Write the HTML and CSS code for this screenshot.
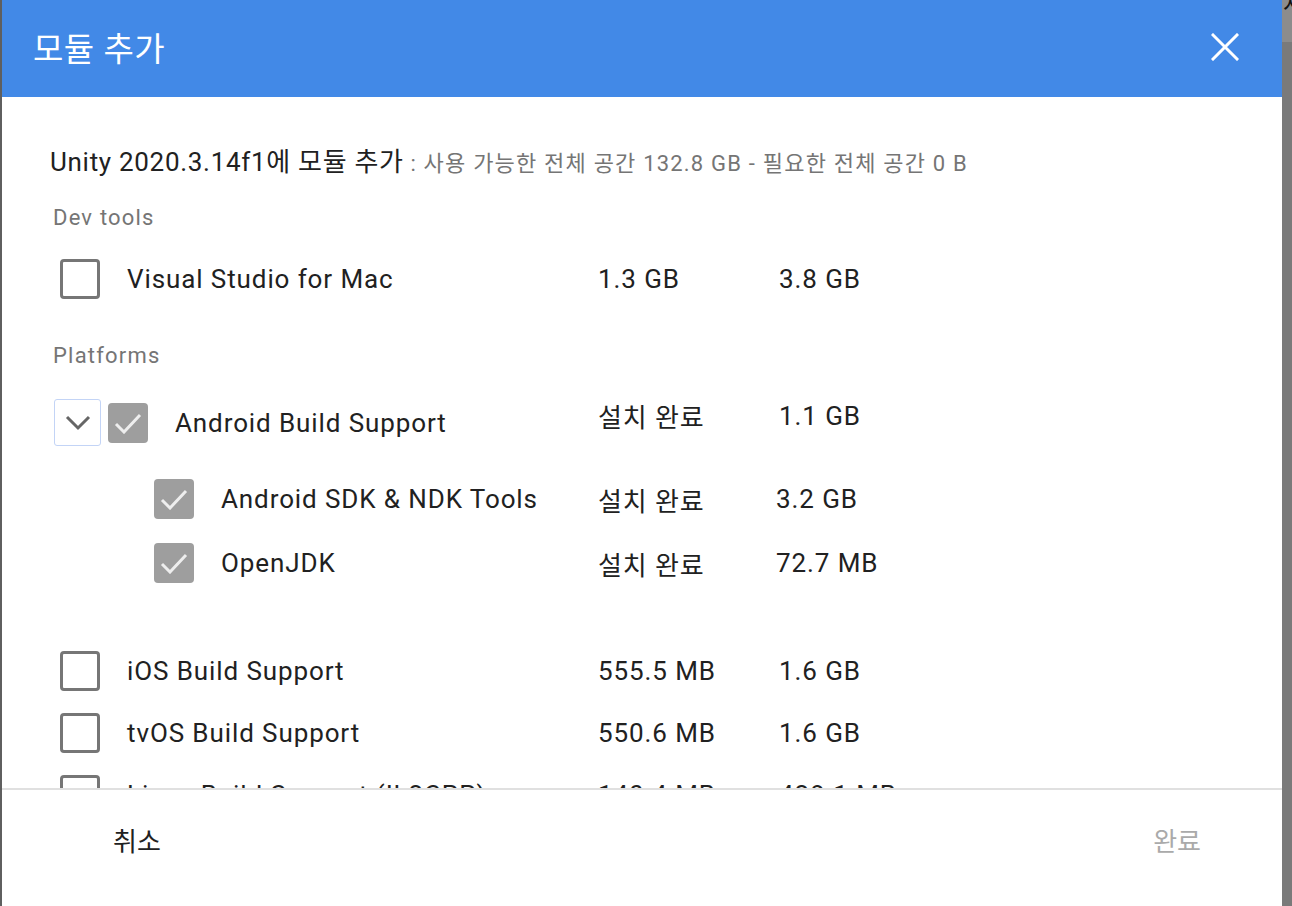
FILE: index.html
```html
<!DOCTYPE html>
<html lang="ko">
  <head>
    <meta charset="UTF-8" />
    <title>모듈 추가</title>
    <link rel="stylesheet" href="styles.css">
  </head>
  <body>
    <div class="edge-left"></div>
    <div class="dialog">
      <div class="dialog-header">
        <div class="dialog-title">모듈 추가</div>
        <svg class="close-icon" width="28" height="28" viewBox="0 0 28 28">
          <path d="M2 2 L26 26 M26 2 L2 26" stroke="#fff" stroke-width="3" stroke-linecap="square" fill="none" />
        </svg>
      </div>

      <div class="dialog-body">
        <div class="summary">
          Unity 2020.3.14f1에 모듈 추가<span class="summary-note"> : 사용 가능한 전체 공간 132.8 GB - 필요한 전체 공간 0 B</span>
        </div>

        <div class="group-label first">Dev tools</div>
        <div class="module-row row-vs">
          <div class="module-main">
            <span class="checkbox"></span>
            <span class="module-name">Visual Studio for Mac</span>
          </div>
          <div class="size">1.3 GB</div>
          <div class="size">3.8 GB</div>
        </div>

        <div class="group-label">Platforms</div>
        <div class="module-row row-android">
          <div class="module-main">
            <span class="expander">
              <svg width="26" height="16" viewBox="0 0 26 16">
                <path d="M2 2 L13 13 L24 2" stroke="#666" stroke-width="3" fill="none" />
              </svg>
            </span>
            <span class="checkbox checked">
              <svg width="28" height="22" viewBox="0 0 28 22">
                <path d="M2 12 L10 20 L26 3" stroke="#eeeeee" stroke-width="3" fill="none" />
              </svg>
            </span>
            <span class="module-name">Android Build Support</span>
          </div>
          <div class="size raised">설치 완료</div>
          <div class="size raised">1.1 GB</div>
        </div>

        <div class="module-row child row-sdk">
          <div class="module-main">
            <span class="checkbox checked">
              <svg width="28" height="22" viewBox="0 0 28 22">
                <path d="M2 12 L10 20 L26 3" stroke="#eeeeee" stroke-width="3" fill="none" />
              </svg>
            </span>
            <span class="module-name">Android SDK &amp; NDK Tools</span>
          </div>
          <div class="size">설치 완료</div>
          <div class="size">3.2 GB</div>
        </div>

        <div class="module-row child row-jdk">
          <div class="module-main">
            <span class="checkbox checked">
              <svg width="28" height="22" viewBox="0 0 28 22">
                <path d="M2 12 L10 20 L26 3" stroke="#eeeeee" stroke-width="3" fill="none" />
              </svg>
            </span>
            <span class="module-name">OpenJDK</span>
          </div>
          <div class="size">설치 완료</div>
          <div class="size">72.7 MB</div>
        </div>

        <div class="module-row row-ios">
          <div class="module-main">
            <span class="checkbox"></span>
            <span class="module-name">iOS Build Support</span>
          </div>
          <div class="size">555.5 MB</div>
          <div class="size">1.6 GB</div>
        </div>

        <div class="module-row row-next">
          <div class="module-main">
            <span class="checkbox"></span>
            <span class="module-name">tvOS Build Support</span>
          </div>
          <div class="size">550.6 MB</div>
          <div class="size">1.6 GB</div>
        </div>

        <div class="module-row row-next">
          <div class="module-main">
            <span class="checkbox"></span>
            <span class="module-name">Linux Build Support (IL2CPP)</span>
          </div>
          <div class="size">140.4 MB</div>
          <div class="size">428.1 MB</div>
        </div>
      </div>

      <div class="dialog-footer">
        <button class="btn-cancel">취소</button>
        <button class="btn-done" disabled>완료</button>
      </div>
    </div>
    <div class="edge-right">
      <div class="edge-top">시</div>
    </div>
  </body>
</html>
```

FILE: styles.css
```css
* {
  box-sizing: border-box;
}

html,
body {
  margin: 0;
  height: 100%;
}

body {
  display: flex;
  background: #7a7a7a;
  overflow: hidden;
  font-family: Roboto, 'Noto Sans CJK KR', sans-serif;
  color: #212121;
}

.edge-left {
  width: 2px;
  background: #5f5f5f;
}

.edge-right {
  flex: 1;
  background: #7a7a7a;
  overflow: hidden;
}

.edge-top {
  height: 48px;
  background: #8c8c8c;
  color: #111;
  font-size: 22px;
  line-height: 22px;
  margin-top: -6px;
  padding-left: 1px;
}

.dialog {
  width: 1280px;
  height: 906px;
  background: #fff;
  display: flex;
  flex-direction: column;
}

.dialog-header {
  height: 97px;
  flex-shrink: 0;
  background: #4289e7;
  display: flex;
  align-items: center;
  justify-content: space-between;
  padding: 0 43px 0 31px;
}

.dialog-title {
  color: #fff;
  font-size: 33px;
  letter-spacing: 0.5px;
  margin-top: -4px;
}

.close-icon {
  margin-top: -4px;
}

.dialog-body {
  height: 691px;
  overflow: hidden;
  padding: 50px 0 0 48px;
}

.summary {
  font-size: 26px;
  letter-spacing: 0.7px;
  line-height: 30px;
  color: #212121;
  white-space: nowrap;
}

.summary-note {
  font-size: 22px;
  letter-spacing: 1.2px;
  color: #757575;
}

.group-label {
  font-size: 22px;
  letter-spacing: 1.2px;
  line-height: 24px;
  color: #757575;
  margin-top: 43px;
  padding-left: 3px;
}

.group-label.first {
  margin-top: 27px;
}

.module-row {
  display: grid;
  grid-template-columns: 548px 181px auto;
  align-items: center;
  height: 44px;
  font-size: 26px;
  letter-spacing: 0.9px;
}

.module-main {
  display: flex;
  align-items: center;
  padding-left: 10px;
}

.row-vs {
  margin-top: 27px;
}

.row-android {
  margin-top: 29px;
  height: 48px;
}

.row-android .module-main {
  padding-left: 4px;
}

.row-sdk {
  margin-top: 32px;
}

.row-jdk {
  margin-top: 20px;
}

.row-ios {
  margin-top: 64px;
}

.row-next {
  margin-top: 18px;
}

.module-row.child .module-main {
  padding-left: 104px;
}

.module-row.child .size:last-child {
  margin-left: -3px;
}

.checkbox {
  width: 40px;
  height: 40px;
  border: 3px solid #767676;
  border-radius: 4px;
  flex-shrink: 0;
  display: flex;
  align-items: center;
  justify-content: center;
}

.checkbox.checked {
  border: none;
  background: #9e9e9e;
}

.expander {
  width: 47px;
  height: 47px;
  border: 1px solid #c3d4f6;
  border-radius: 3px;
  display: flex;
  align-items: center;
  justify-content: center;
  margin-right: 7px;
  flex-shrink: 0;
}

.module-name {
  margin-left: 27px;
  color: #212121;
  white-space: nowrap;
}

.size {
  color: #212121;
  white-space: nowrap;
}

.size.raised {
  margin-bottom: 14px;
}

.dialog-footer {
  flex: 1;
  border-top: 2px solid #e0e0e0;
  display: flex;
  justify-content: space-between;
  align-items: center;
  padding: 0 81px 18px 111px;
}

.dialog-footer button {
  background: none;
  border: none;
  font-family: Roboto, 'Noto Sans CJK KR', sans-serif;
  font-size: 26px;
  padding: 0;
}

.btn-cancel {
  color: #212121;
}

.btn-done {
  color: #aaaaaa;
}
```
